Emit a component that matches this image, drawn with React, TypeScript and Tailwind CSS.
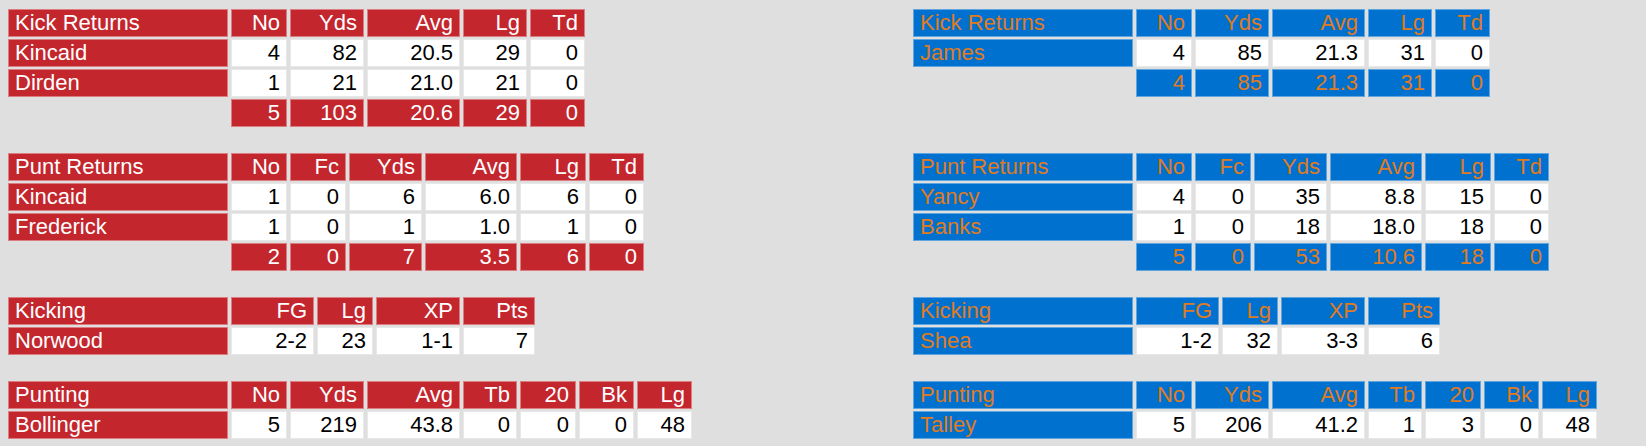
import React from "react";

type Team = "home" | "away";

interface Section {
    title: string;
    cols: string[];
    grid: string;
    rows: { name: string; vals: string[] }[];
    total?: string[];
}

const theme: Record<Team, string> = {
    home: "bg-[#c4262e] border-[#dc7d82] text-white",
    away: "bg-[#0071ce] border-[#5fa6e0] text-[#e07b20]",
};

const kickGrid = "grid grid-cols-[220px_56px_74px_93px_64px_55px] gap-x-[3px] gap-y-[2px]";
const puntRetGrid = "grid grid-cols-[220px_56px_56px_73px_92px_66px_55px] gap-x-[3px] gap-y-[2px]";
const kickingGrid = "grid grid-cols-[220px_83px_56px_84px_72px] gap-x-[3px] gap-y-[2px]";
const puntingGrid = "grid grid-cols-[220px_56px_74px_93px_54px_56px_55px_55px] gap-x-[3px] gap-y-[2px]";

const home: Section[] = [
    {
        title: "Kick Returns",
        cols: ["No", "Yds", "Avg", "Lg", "Td"],
        grid: kickGrid,
        rows: [
            { name: "Kincaid", vals: ["4", "82", "20.5", "29", "0"] },
            { name: "Dirden", vals: ["1", "21", "21.0", "21", "0"] },
        ],
        total: ["5", "103", "20.6", "29", "0"],
    },
    {
        title: "Punt Returns",
        cols: ["No", "Fc", "Yds", "Avg", "Lg", "Td"],
        grid: puntRetGrid,
        rows: [
            { name: "Kincaid", vals: ["1", "0", "6", "6.0", "6", "0"] },
            { name: "Frederick", vals: ["1", "0", "1", "1.0", "1", "0"] },
        ],
        total: ["2", "0", "7", "3.5", "6", "0"],
    },
    {
        title: "Kicking",
        cols: ["FG", "Lg", "XP", "Pts"],
        grid: kickingGrid,
        rows: [{ name: "Norwood", vals: ["2-2", "23", "1-1", "7"] }],
    },
    {
        title: "Punting",
        cols: ["No", "Yds", "Avg", "Tb", "20", "Bk", "Lg"],
        grid: puntingGrid,
        rows: [{ name: "Bollinger", vals: ["5", "219", "43.8", "0", "0", "0", "48"] }],
    },
];

const away: Section[] = [
    {
        title: "Kick Returns",
        cols: ["No", "Yds", "Avg", "Lg", "Td"],
        grid: kickGrid,
        rows: [{ name: "James", vals: ["4", "85", "21.3", "31", "0"] }],
        total: ["4", "85", "21.3", "31", "0"],
    },
    {
        title: "Punt Returns",
        cols: ["No", "Fc", "Yds", "Avg", "Lg", "Td"],
        grid: puntRetGrid,
        rows: [
            { name: "Yancy", vals: ["4", "0", "35", "8.8", "15", "0"] },
            { name: "Banks", vals: ["1", "0", "18", "18.0", "18", "0"] },
        ],
        total: ["5", "0", "53", "10.6", "18", "0"],
    },
    {
        title: "Kicking",
        cols: ["FG", "Lg", "XP", "Pts"],
        grid: kickingGrid,
        rows: [{ name: "Shea", vals: ["1-2", "32", "3-3", "6"] }],
    },
    {
        title: "Punting",
        cols: ["No", "Yds", "Avg", "Tb", "20", "Bk", "Lg"],
        grid: puntingGrid,
        rows: [{ name: "Talley", vals: ["5", "206", "41.2", "1", "3", "0", "48"] }],
    },
];

const cell = "h-[28px] border leading-[26px] whitespace-nowrap";

function StatTable({ section, team }: { section: Section; team: Team }) {
    const t = theme[team];
    return (
        <div className={section.grid}>
            {/* header */}
            <div className={`${cell} ${t} pl-[6px]`}>{section.title}</div>
            {section.cols.map((c, i) => (
                <div key={i} className={`${cell} ${t} pr-[6px] text-right`}>
                    {c}
                </div>
            ))}

            {/* players */}
            {section.rows.map((r) => (
                <React.Fragment key={r.name}>
                    <div className={`${cell} ${t} pl-[6px]`}>{r.name}</div>
                    {r.vals.map((v, i) => (
                        <div
                            key={i}
                            className={`${cell} bg-white border-[#e8e8e8] text-black pr-[6px] text-right`}
                        >
                            {v}
                        </div>
                    ))}
                </React.Fragment>
            ))}

            {/* totals */}
            {section.total && (
                <>
                    <div />
                    {section.total.map((v, i) => (
                        <div key={i} className={`${cell} ${t} pr-[6px] text-right`}>
                            {v}
                        </div>
                    ))}
                </>
            )}
        </div>
    );
}

export default function App() {
    return (
        <div
            className="min-h-[446px] bg-[#dfdfdf] pl-[8px] pt-[9px] text-[22px]"
            style={{ fontFamily: '"Liberation Sans", Arial, sans-serif' }}
        >
            <div className="grid grid-cols-[905px_auto] gap-y-[26px] items-start">
                {home.map((s, i) => (
                    <React.Fragment key={s.title}>
                        <StatTable section={s} team="home" />
                        <StatTable section={away[i]} team="away" />
                    </React.Fragment>
                ))}
            </div>
        </div>
    );
}
